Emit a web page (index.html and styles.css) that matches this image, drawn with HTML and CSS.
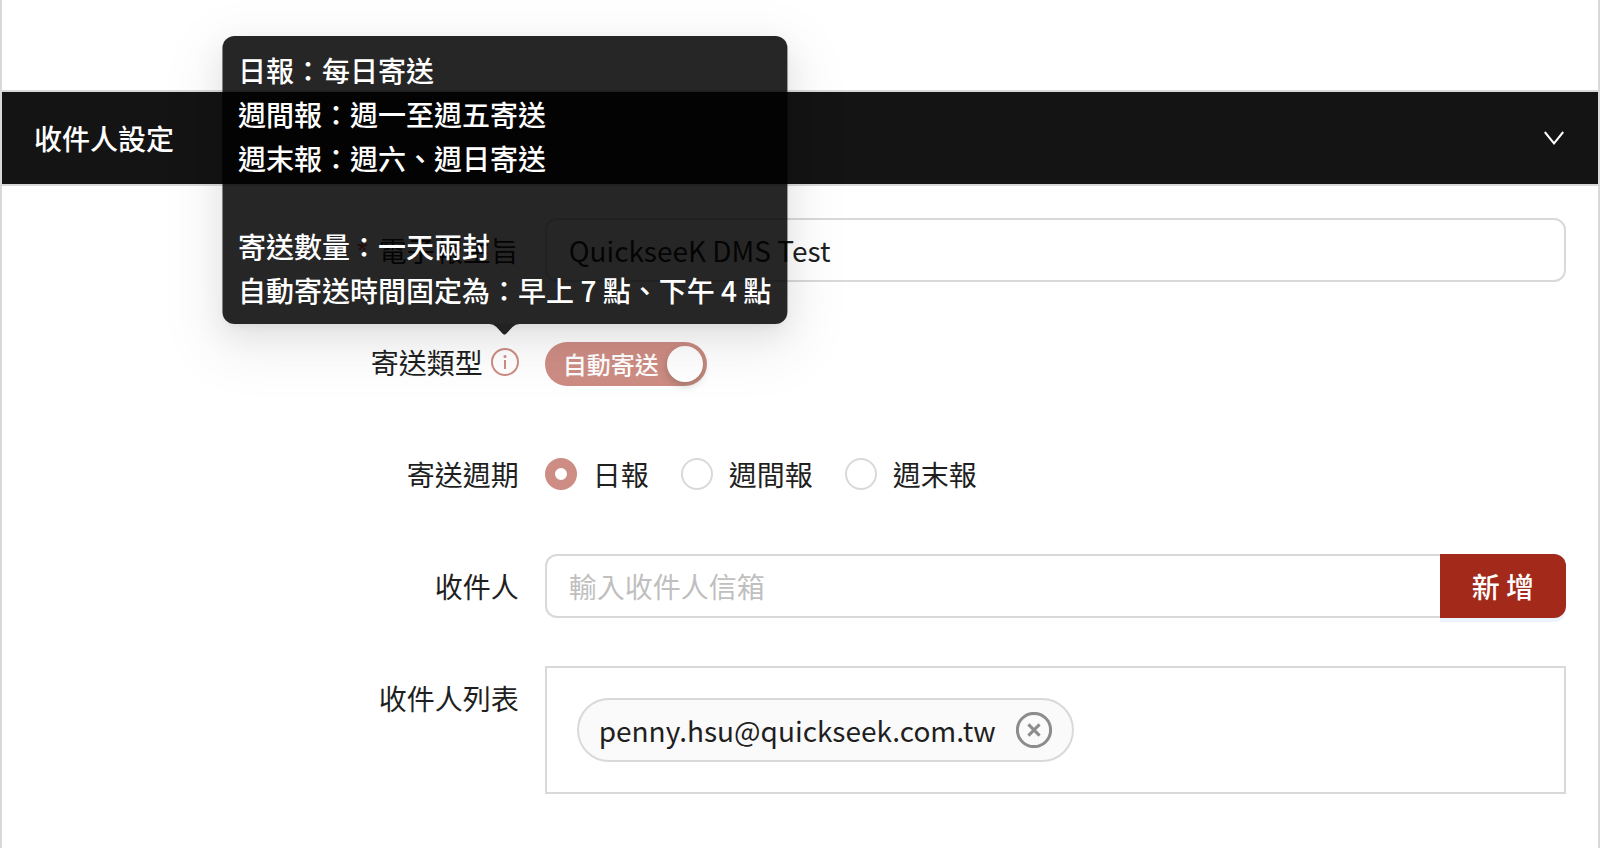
FILE: index.html
```html
<!DOCTYPE html>
<html lang="zh-Hant">
<head>
    <meta charset="UTF-8">
    <meta name="viewport" content="width=device-width, initial-scale=1.0">
    <title>收件人設定</title>
    <link rel="stylesheet" href="styles.css">
</head>
<body>
    <div class="collapse">
        <div class="prev-panel"></div>
        <button type="button" class="collapse-header" aria-expanded="true" aria-controls="panel">
            <span>收件人設定</span>
            <svg class="arrow" viewBox="0 0 24 24" width="24" height="24" aria-hidden="true">
                <path d="M2.8 6 L12 17.4 L21.2 6" fill="none" stroke="#fff" stroke-width="2"/>
            </svg>
        </button>
        <form class="panel" id="panel">
            <div class="form-item">
                <div class="form-label">
                    <label for="subject"><span class="required">*</span>電子報主旨</label>
                </div>
                <div class="form-control">
                    <input type="text" class="input" id="subject" value="QuickseeK DMS Test">
                </div>
            </div>
            <div class="form-item">
                <div class="form-label">
                    <label for="send-type">寄送類型</label>
                    <span class="info">
                        <svg viewBox="0 0 28 28" width="28" height="28" aria-hidden="true">
                            <circle cx="14" cy="14" r="13" fill="none" stroke="currentColor" stroke-width="2"/>
                            <circle cx="14" cy="8.6" r="1.5" fill="currentColor"/>
                            <rect x="13" y="12" width="2" height="9" fill="currentColor"/>
                        </svg>
                        <span class="tooltip" role="tooltip">
                            日報：每日寄送<br>
                            週間報：週一至週五寄送<br>
                            週末報：週六、週日寄送<br>
                            <br>
                            寄送數量：一天兩封<br>
                            自動寄送時間固定為：早上 7 點、下午 4 點
                            <svg class="tooltip-arrow" viewBox="0 0 30 11" width="30" height="11" aria-hidden="true">
                                <path d="M0 0 Q4 0 7 3 L13 9.5 Q15 11.8 17 9.5 L23 3 Q26 0 30 0 Z"/>
                            </svg>
                        </span>
                    </span>
                </div>
                <div class="form-control">
                    <button type="button" class="switch" id="send-type" role="switch" aria-checked="true" disabled>
                        自動寄送
                        <span class="switch-handle"></span>
                    </button>
                </div>
            </div>
            <div class="form-item">
                <div class="form-label"><span id="period-label">寄送週期</span></div>
                <div class="form-control" role="radiogroup" aria-labelledby="period-label">
                    <label class="radio"><input type="radio" name="period" checked>日報</label>
                    <label class="radio"><input type="radio" name="period">週間報</label>
                    <label class="radio"><input type="radio" name="period">週末報</label>
                </div>
            </div>
            <div class="form-item">
                <div class="form-label"><label for="recipient">收件人</label></div>
                <div class="form-control">
                    <input type="email" class="input input-left" id="recipient" placeholder="輸入收件人信箱">
                    <button type="button" class="btn-add">新 增</button>
                </div>
            </div>
            <div class="form-item">
                <div class="form-label"><span>收件人列表</span></div>
                <div class="form-control">
                    <div class="list">
                        <div class="tag">
                            <span>penny.hsu@quickseek.com.tw</span>
                            <button type="button" class="tag-close" aria-label="移除">
                                <svg viewBox="0 0 36 36" width="36" height="36" aria-hidden="true">
                                    <circle cx="18" cy="18" r="16.6"/>
                                    <path d="M12.4 12.4 L23.6 23.6 M23.6 12.4 L12.4 23.6"/>
                                </svg>
                            </button>
                        </div>
                    </div>
                </div>
            </div>
        </form>
    </div>
</body>
</html>
```
FILE: styles.css
```css
*{
    margin: 0;
    padding: 0;
    box-sizing: border-box;
}
body{
    background: #fff;
    color: #1f1f1f;
    font-family: "Noto Sans CJK TC", sans-serif;
    font-size: 28px;
    line-height: 44px;
}
button, input{
    font: inherit;
    color: inherit;
}
svg{
    display: block;
}
.collapse{
    min-height: 100vh;
    border: solid #d9d9d9;
    border-width: 0 2px;
    overflow: hidden;
}
.prev-panel{
    height: 90px;
}
.collapse-header{
    display: flex;
    align-items: center;
    justify-content: space-between;
    width: 100%;
    padding: 24px 32px;
    border: solid #d9d9d9;
    border-width: 2px 0;
    background: #141414;
    color: #fff;
    font-weight: 500;
    cursor: pointer;
}
.panel{
    padding: 32px;
}
.form-item{
    display: grid;
    grid-template-columns: 1fr 2fr;
    margin-bottom: 48px;
}
.form-label{
    display: flex;
    align-items: center;
    justify-content: flex-end;
    height: 64px;
    padding-right: 26px;
}
.form-label label{
    display: flex;
    align-items: center;
}
.form-control{
    display: flex;
    align-items: center;
    min-height: 64px;
}
.required{
    margin-right: 8px;
    padding-top: 8px;
    color: #ff4d4f;
    font-family: "Liberation Mono", monospace;
    line-height: 28px;
}

/* 輸入框 */
.input{
    flex: 1;
    min-width: 0;
    height: 64px;
    padding: 0 22px;
    border: 2px solid #d9d9d9;
    border-radius: 12px;
    background: #fff;
    outline: none;
}
.input::placeholder{
    color: #bfbfbf;
}
.input-left{
    border-right: 0;
    border-radius: 12px 0 0 12px;
}
.btn-add{
    height: 64px;
    padding: 0 32px;
    border: 0;
    border-radius: 0 12px 12px 0;
    background: #a32a1a;
    box-shadow: 0 4px 0 #ebf4ff;
    color: #fff;
    font-weight: 500;
    cursor: pointer;
}

/* 提示 */
.info{
    position: relative;
    margin-left: 8px;
    color: #ce8d84;
}
.tooltip{
    position: absolute;
    z-index: 10;
    bottom: calc(100% + 24px);
    left: 50%;
    transform: translateX(-50%);
    padding: 12px 16px;
    border-radius: 12px;
    background: rgba(0, 0, 0, 0.85);
    box-shadow: 0 12px 32px 0 rgba(0, 0, 0, 0.08), 0 6px 12px -8px rgba(0, 0, 0, 0.12), 0 18px 56px 16px rgba(0, 0, 0, 0.05);
    color: #fff;
    font-weight: 500;
    white-space: nowrap;
}
.tooltip-arrow{
    position: absolute;
    top: 100%;
    left: 50%;
    transform: translateX(-50%);
    fill: #222;
}

/* 開關 */
.switch{
    position: relative;
    height: 44px;
    margin-top: 4px;
    padding: 0 48px 0 18px;
    border: 0;
    border-radius: 22px;
    background: #ce8d84;
    color: #fff;
    font-size: 24px;
    font-weight: 500;
}
.switch-handle{
    position: absolute;
    top: 4px;
    right: 4px;
    width: 36px;
    height: 36px;
    border-radius: 50%;
    background: #fff;
    box-shadow: 0 4px 8px 0 rgba(0, 35, 11, 0.2);
}

/* 單選 */
.radio{
    display: flex;
    align-items: center;
    gap: 16px;
    margin-right: 32px;
}
.radio input{
    appearance: none;
    width: 32px;
    height: 32px;
    border: 2px solid #d9d9d9;
    border-radius: 50%;
    background: #fff;
}
.radio input:checked{
    border: 10px solid #ce8d84;
}

/* 收件人列表 */
.list{
    flex: 1;
    display: flex;
    padding: 30px;
    border: 2px solid #d9d9d9;
}
.tag{
    display: flex;
    align-items: center;
    gap: 20px;
    height: 64px;
    padding: 0 20px;
    border: 2px solid #d9d9d9;
    border-radius: 32px;
    background: #fafafa;
}
.tag-close{
    border: 0;
    background: none;
    cursor: pointer;
}
.tag-close svg{
    fill: none;
    stroke: #8c8c8c;
    stroke-width: 3;
}
```
